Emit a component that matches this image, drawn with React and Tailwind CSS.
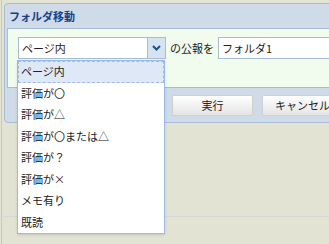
const items = [
  "ページ内",
  "評価が〇",
  "評価が△",
  "評価が〇または△",
  "評価が？",
  "評価が×",
  "メモ有り",
  "既読",
];

const App = () => {
  return (
    <div
      className="relative w-[329px] h-[244px] overflow-hidden bg-[#e3e3d3] text-[11px] text-[#222]"
      style={{ fontFamily: '"Noto Sans CJK JP", "Liberation Sans", sans-serif' }}
    >
      <div className="absolute left-[1px] top-0 w-px h-[244px] bg-[#c9c9c0]"></div>
      <div className="absolute left-0 top-[216px] w-[329px] h-px bg-[#d8d8dc]"></div>

      {/* window */}
      <div className="absolute left-[4px] top-[3px] w-[340px] h-[120px] rounded-[4px] bg-[#cfdbe8] border border-[#a8bcd6]">
        <div className="h-[24px] pl-[4px] pt-[4px] font-bold text-[11px] text-[#15428b]">
          フォルダ移動
        </div>
        <div className="mx-[2px] h-[60px] bg-[#f1fcef] border border-[#a8bcd6] flex items-start pt-[8px] pl-[10px] gap-[4px]">
          <div className="flex w-[148px] h-[22px] border border-[#a8bcd6] bg-white">
            <div className="flex-1 pl-[3px] leading-[20px]">ページ内</div>
            <div className="w-[18px] bg-[#d6e3f2] border-l border-[#a8bcd6] flex items-center justify-center">
              <svg width="9" height="6" viewBox="0 0 9 6">
                <path d="M1 1 L4.5 4.5 L8 1" stroke="#1f4f8f" strokeWidth="2" fill="none" />
              </svg>
            </div>
          </div>
          <div className="leading-[22px]">の公報を</div>
          <div className="flex-1 h-[22px] border border-[#a8bcd6] bg-white pl-[3px] leading-[20px]">
            フォルダ1
          </div>
        </div>
        <div className="flex pl-[167px] pt-[7px] gap-[9px]">
          <button className="w-[82px] h-[21px] rounded-[2px] border border-[#d0d0d0] bg-gradient-to-b from-white to-[#e4e4e4] text-[11px]">
            実行
          </button>
          <button className="w-[82px] h-[21px] rounded-[2px] border border-[#d0d0d0] bg-gradient-to-b from-white to-[#e4e4e4] text-[11px]">
            キャンセル
          </button>
        </div>
      </div>

      {/* dropdown list */}
      <div className="absolute left-[17px] top-[60px] w-[148px] bg-white border border-[#99bbe8] shadow-sm">
        {items.map((item, i) => (
          <div
            key={item}
            className={
              i === 0
                ? "h-[21.5px] leading-[19px] pl-[2px] bg-[#dfe8f6] border border-dashed border-[#a3bae9]"
                : "h-[21.5px] leading-[21px] pl-[3px]"
            }
          >
            {item}
          </div>
        ))}
      </div>
    </div>
  );
};

export default App;
